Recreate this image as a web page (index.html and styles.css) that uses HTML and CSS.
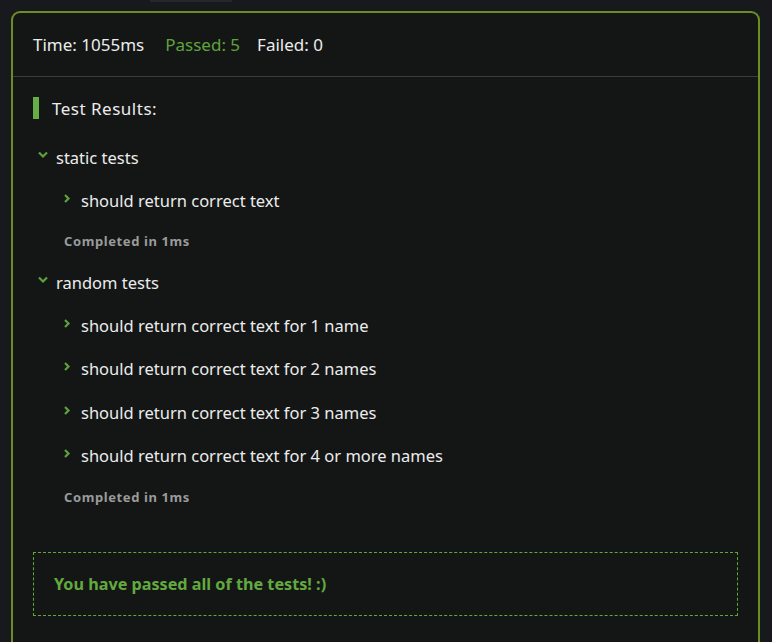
FILE: index.html
```html
<!DOCTYPE html>
<html>
<head>
<meta charset="utf-8">
<link rel="stylesheet" href="styles.css">
</head>
<body>
<div class="tab"></div>
<div class="card">
  <div class="stats">
    <span class="stat time">Time: 1055ms</span>
    <span class="stat passed">Passed: 5</span>
    <span class="stat">Failed: 0</span>
  </div>
  <div class="results">
    <h2 class="title">Test Results:</h2>
    <div class="group">
      <div class="group-head"><svg class="chev" viewBox="0 0 10 10"><path d="M1 2.5 L5 6.5 L9 2.5" /></svg><span>static tests</span></div>
      <div class="items">
        <div class="item"><svg class="chev" viewBox="0 0 10 10"><path d="M3 1 L6.5 4.5 L3 8" /></svg><span>should return correct text</span></div>
        <div class="done">Completed in 1ms</div>
      </div>
    </div>
    <div class="group">
      <div class="group-head"><svg class="chev" viewBox="0 0 10 10"><path d="M1 2.5 L5 6.5 L9 2.5" /></svg><span>random tests</span></div>
      <div class="items">
        <div class="item"><svg class="chev" viewBox="0 0 10 10"><path d="M3 1 L6.5 4.5 L3 8" /></svg><span>should return correct text for 1 name</span></div>
        <div class="item"><svg class="chev" viewBox="0 0 10 10"><path d="M3 1 L6.5 4.5 L3 8" /></svg><span>should return correct text for 2 names</span></div>
        <div class="item"><svg class="chev" viewBox="0 0 10 10"><path d="M3 1 L6.5 4.5 L3 8" /></svg><span>should return correct text for 3 names</span></div>
        <div class="item"><svg class="chev" viewBox="0 0 10 10"><path d="M3 1 L6.5 4.5 L3 8" /></svg><span>should return correct text for 4 or more names</span></div>
        <div class="done">Completed in 1ms</div>
      </div>
    </div>
    <div class="success"><span class="success-text">You have passed all of the tests! :)</span></div>
  </div>
</div>
</body>
</html>
```

FILE: styles.css
```css
html, body {
  margin: 0;
  padding: 0;
  background: #18191d;
  height: 100%;
  overflow: hidden;
}
body {
  font-family: "Noto Sans", "Open Sans", sans-serif;
  color: #ececec;
  padding: 11px 12px 0 11px;
  box-sizing: border-box;
}
.tab {
  position: absolute;
  top: 0;
  left: 150px;
  width: 82px;
  height: 2px;
  background: #26272c;
}
.card {
  border: 2px solid #6b8e23;
  border-bottom: none;
  border-radius: 9px 9px 0 0;
  background: #141616;
  min-height: 700px;
}
.stats {
  display: flex;
  padding: 0 20px;
  height: 63px;
  align-items: center;
  border-bottom: 1px solid #3c3d3d;
  font-size: 17px;
}
.time { margin-right: 21px; }
.passed { color: #5fa43a; margin-right: 17px; }
.results {
  padding: 20px 20px 0 20px;
}
.title {
  margin: 0 0 24px 0;
  font-size: 17px;
  font-weight: 400;
  letter-spacing: 0.5px;
  border-left: 6px solid #67ad45;
  padding-left: 13px;
  height: 22px;
  display: flex;
  align-items: center;
}
.group-head {
  display: flex;
  align-items: center;
  height: 28px;
  font-size: 16.5px;
  padding-left: 5px;
  gap: 8px;
}
.chev {
  width: 10px;
  height: 10px;
  fill: none;
  stroke: #5da23a;
  stroke-width: 2.2;
  flex: none;
}
.group-head .chev { margin-top: -4px; }
.items {
  padding-left: 29px;
  padding-top: 7.5px;
}
.item {
  display: flex;
  align-items: center;
  height: 43.5px;
  font-size: 16.5px;
  gap: 9px;
}
.item .chev { margin-top: -3px; }
.done {
  font-size: 13px;
  font-weight: 700;
  color: #9a9b9b;
  letter-spacing: 0.6px;
  height: 38px;
  line-height: 38px;
  padding-left: 2px;
  margin-bottom: 8px;
}
.success {
  margin-top: 36.5px;
  border: 1px dashed #5fa83c;
  height: 62px;
  display: flex;
  align-items: center;
  padding-left: 20px;
}
.success-text {
  color: #62aa3e;
  font-family: "Noto Sans", sans-serif;
  font-weight: 700;
  font-size: 16.2px;
}
```
